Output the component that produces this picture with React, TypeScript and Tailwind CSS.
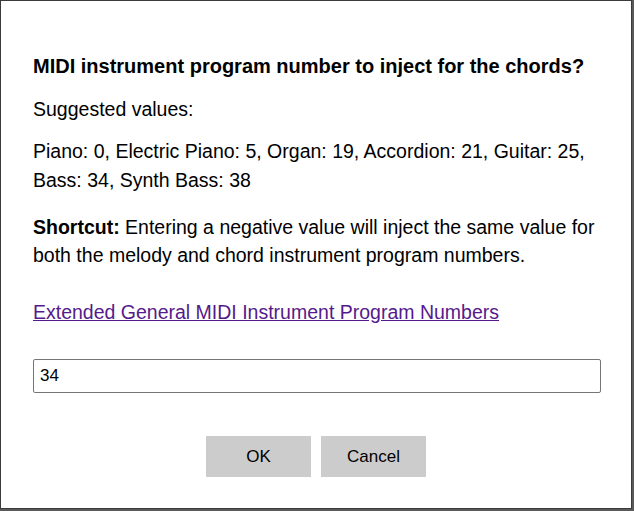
export default function App() {
  return (
    <div className="h-[511px] w-[634px] overflow-hidden bg-[#5a5a5a] font-['Liberation_Sans',Arial,sans-serif] text-black">
      <div className="flex h-[509px] w-[632px] flex-col border border-[#3a3a3a] bg-white px-[32px] pt-[51px]">
        <p className="text-[20px] leading-[28px] font-bold">
          MIDI instrument program number to inject for the chords?
        </p>
        <p className="mt-[15px] text-[19.5px] leading-[28px]">Suggested values:</p>
        <p className="mt-[14px] text-[19.5px] leading-[29px]">
          Piano: 0, Electric Piano: 5, Organ: 19, Accordion: 21, Guitar: 25, Bass: 34, Synth Bass: 38
        </p>
        <p className="mt-[18px] text-[19.5px] leading-[28px]">
          <span className="font-bold">Shortcut:</span> Entering a negative value will inject the same value for
          both the melody and chord instrument program numbers.
        </p>
        <a href="#" className="mt-[29px] text-[19.5px] leading-[28px] text-[#551a8b] underline">
          Extended General MIDI Instrument Program Numbers
        </a>
        <input
          type="text"
          defaultValue="34"
          className="mt-[33px] h-[34px] w-[568px] rounded-[2px] border border-[#767676] px-[6px] text-[17px] outline-none"
        />
        <div className="mt-[43px] flex justify-center gap-[10px]">
          <button className="h-[41px] w-[105px] bg-[#cccccc] text-[17px]">OK</button>
          <button className="h-[41px] w-[105px] bg-[#cccccc] text-[17px]">Cancel</button>
        </div>
      </div>
    </div>
  )
}
